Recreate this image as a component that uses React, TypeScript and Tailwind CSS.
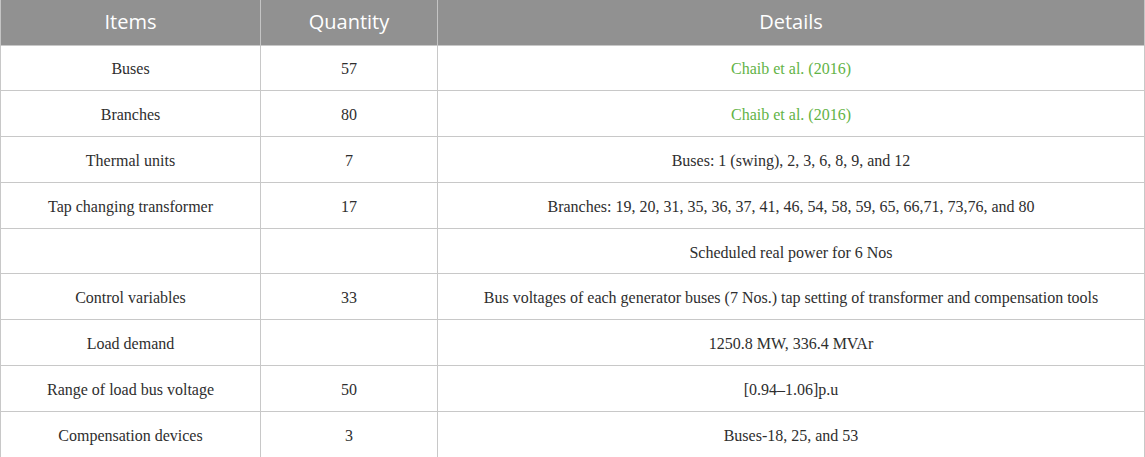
const rows = [
  { item: 'Buses', qty: '57', details: 'Chaib et al. (2016)', link: true },
  { item: 'Branches', qty: '80', details: 'Chaib et al. (2016)', link: true },
  { item: 'Thermal units', qty: '7', details: 'Buses: 1 (swing), 2, 3, 6, 8, 9, and 12' },
  { item: 'Tap changing transformer', qty: '17', details: 'Branches: 19, 20, 31, 35, 36, 37, 41, 46, 54, 58, 59, 65, 66,71, 73,76, and 80' },
  { item: '', qty: '', details: 'Scheduled real power for 6 Nos' },
  { item: 'Control variables', qty: '33', details: 'Bus voltages of each generator buses (7 Nos.) tap setting of transformer and compensation tools' },
  { item: 'Load demand', qty: '', details: '1250.8 MW, 336.4 MVAr' },
  { item: 'Range of load bus voltage', qty: '50', details: '[0.94–1.06]p.u' },
  { item: 'Compensation devices', qty: '3', details: 'Buses-18, 25, and 53' },
]

export default function App() {
  return (
    <div className="h-[457px] w-[1145px] overflow-hidden bg-white">
      <table className="w-full table-fixed border-collapse">
        <colgroup>
          <col className="w-[260px]" />
          <col className="w-[177px]" />
          <col />
        </colgroup>
        <thead>
          <tr className="h-[45px] bg-[#919191] font-['Open_Sans',sans-serif] text-[20px] text-white">
            <th className="border-x border-[#c4c4c4] font-normal">Items</th>
            <th className="border-x border-[#c4c4c4] font-normal">Quantity</th>
            <th className="border-x border-[#c4c4c4] font-normal">Details</th>
          </tr>
        </thead>
        <tbody className="font-['Liberation_Serif',serif] text-[16px] text-[#2e2e2e]">
          {rows.map((row, i) => (
            <tr key={i} className="h-[45.8px]">
              <td className="border border-[#c8c8c8] pt-[3px] text-center">{row.item}</td>
              <td className="border border-[#c8c8c8] pt-[3px] text-center">{row.qty}</td>
              <td className={`border border-[#c8c8c8] pt-[3px] text-center ${row.link ? 'text-[#62b346]' : ''}`}>{row.details}</td>
            </tr>
          ))}
        </tbody>
      </table>
    </div>
  )
}
